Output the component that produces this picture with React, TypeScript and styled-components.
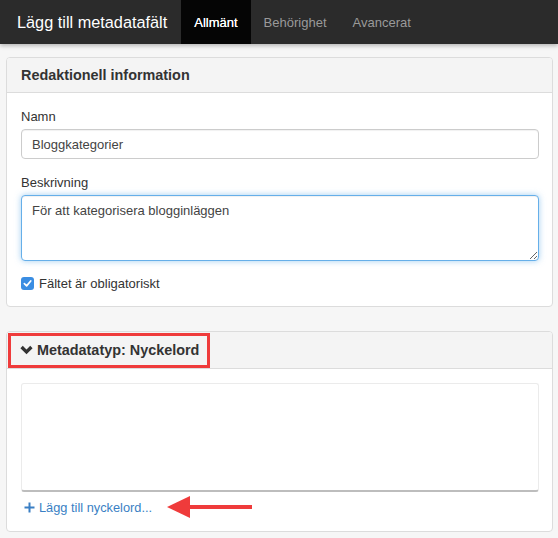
import styled, { createGlobalStyle } from "styled-components";

const GlobalStyle = createGlobalStyle`
  * { box-sizing: border-box; }
  body {
    margin: 0;
    background: #f6f6f6;
    font-family: "Liberation Sans", Arial, sans-serif;
    color: #333;
  }
`;

export default function App() {
  return (
    <>
      <GlobalStyle />
      <Navbar>
        <Brand>Lägg till metadatafält</Brand>
        <Tab $active>Allmänt</Tab>
        <Tab>Behörighet</Tab>
        <Tab>Avancerat</Tab>
      </Navbar>
      <Page>
        <Panel>
          <PanelHeading>
            <PanelTitle>Redaktionell information</PanelTitle>
          </PanelHeading>
          <PanelBody>
            <FormGroup>
              <Label>Namn</Label>
              <Input defaultValue="Bloggkategorier" />
            </FormGroup>
            <FormGroup>
              <Label>Beskrivning</Label>
              <TextArea defaultValue="För att kategorisera blogginläggen" />
            </FormGroup>
            <CheckRow>
              <CheckBox>
                <svg width="9" height="9" viewBox="0 0 10 10">
                  <path
                    d="M1.5 5.2 L4 7.6 L8.6 2.2"
                    fill="none"
                    stroke="#fff"
                    strokeWidth="1.9"
                    strokeLinecap="round"
                    strokeLinejoin="round"
                  />
                </svg>
              </CheckBox>
              Fältet är obligatoriskt
            </CheckRow>
          </PanelBody>
        </Panel>

        <Panel>
          <PanelHeading $tight>
            <Highlight>
              <svg width="13" height="10" viewBox="0 0 13 10">
                <path
                  d="M1.6 2 L6.5 6.9 L11.4 2"
                  fill="none"
                  stroke="#333"
                  strokeWidth="3.3"
                />
              </svg>
              <PanelTitle>Metadatatyp: Nyckelord</PanelTitle>
            </Highlight>
          </PanelHeading>
          <PanelBody $bottom={9}>
            <KeywordBox />
            <AddRow>
              <AddLink href="#">
                <svg width="11" height="11" viewBox="0 0 11 11">
                  <path d="M5.5 0.5 V10.5 M0.5 5.5 H10.5" stroke="#3a7fc4" strokeWidth="2" />
                </svg>
                Lägg till nyckelord...
              </AddLink>
              <svg width="86" height="24" viewBox="0 0 86 24">
                <path d="M20 12 H85" stroke="#ef3b3b" strokeWidth="4" />
                <path d="M0 12 L23 1 L23 23 Z" fill="#ef3b3b" />
              </svg>
            </AddRow>
          </PanelBody>
        </Panel>
      </Page>
    </>
  );
}

const Navbar = styled.nav`
  height: 44px;
  background: #2b2b2b;
  display: flex;
  align-items: stretch;
  box-shadow: 0 2px 4px rgba(0, 0, 0, 0.25);
  position: relative;
`;

const Brand = styled.div`
  color: #fff;
  font-size: 16.3px;
  display: flex;
  align-items: center;
  padding: 0 14px 0 17px;
`;

const Tab = styled.div<{ $active?: boolean }>`
  display: flex;
  align-items: center;
  padding: 0 13px;
  font-size: 13px;
  background: ${(p) => (p.$active ? "#050505" : "transparent")};
  color: ${(p) => (p.$active ? "#fff" : "#9a9a9a")};
  text-shadow: ${(p) => (p.$active ? "0 0 0.4px #fff" : "none")};
`;

const Page = styled.main`
  padding: 13px 5px 0 6px;
  display: flex;
  flex-direction: column;
  gap: 24px;
`;

const Panel = styled.section`
  background: #fff;
  border: 1px solid #dcdcdc;
  border-radius: 4px;
  overflow: hidden;
`;

const PanelHeading = styled.header<{ $tight?: boolean }>`
  background: #f4f4f4;
  border-bottom: 1px solid #dcdcdc;
  height: ${(p) => (p.$tight ? "37px" : "35px")};
  display: flex;
  align-items: center;
  padding: ${(p) => (p.$tight ? "0 1px" : "0 14px")};
`;

const PanelTitle = styled.h3`
  margin: 0;
  font-size: 14.4px;
  font-weight: bold;
  color: #333;
`;

const Highlight = styled.div`
  display: flex;
  align-items: center;
  gap: 4px;
  height: 35px;
  border: 3px solid #ef3b3b;
  padding: 0 8px 0 9px;
`;

const PanelBody = styled.div<{ $bottom?: number }>`
  padding: 14px 13px ${(p) => p.$bottom ?? 15}px 14px;
`;

const FormGroup = styled.div`
  margin-bottom: 15px;
`;

const Label = styled.label`
  display: block;
  font-size: 13px;
  line-height: 18px;
  margin: 1px 0 3px;
  color: #333;
`;

const Input = styled.input`
  display: block;
  width: 100%;
  height: 30px;
  border: 1px solid #ccc;
  border-radius: 4px;
  padding: 0 10px;
  font-family: inherit;
  font-size: 13px;
  color: #444;
  box-shadow: inset 0 1px 1px rgba(0, 0, 0, 0.06);
  outline: none;
`;

const TextArea = styled.textarea`
  display: block;
  width: 100%;
  height: 66px;
  border: 1px solid #66afe9;
  border-radius: 4px;
  padding: 7px 10px;
  font-family: inherit;
  font-size: 13px;
  color: #444;
  resize: vertical;
  outline: none;
  box-shadow: inset 0 1px 1px rgba(0, 0, 0, 0.06), 0 0 6px rgba(102, 175, 233, 0.6);
`;

const CheckRow = styled.label`
  display: flex;
  align-items: center;
  gap: 5px;
  font-size: 13px;
  height: 15px;
`;

const CheckBox = styled.span`
  width: 13px;
  height: 13px;
  border-radius: 3px;
  background: #3a8de2;
  display: flex;
  align-items: center;
  justify-content: center;
`;

const KeywordBox = styled.div`
  height: 109px;
  border: 1px solid #ebebeb;
  border-bottom: 2px solid #bdbdbd;
  border-radius: 3px;
`;

const AddRow = styled.div`
  display: flex;
  align-items: center;
  gap: 15px;
  height: 30px;
  padding-left: 3px;
`;

const AddLink = styled.a`
  display: flex;
  align-items: center;
  gap: 4px;
  font-size: 12.8px;
  color: #3a7fc4;
  text-decoration: none;
`;
